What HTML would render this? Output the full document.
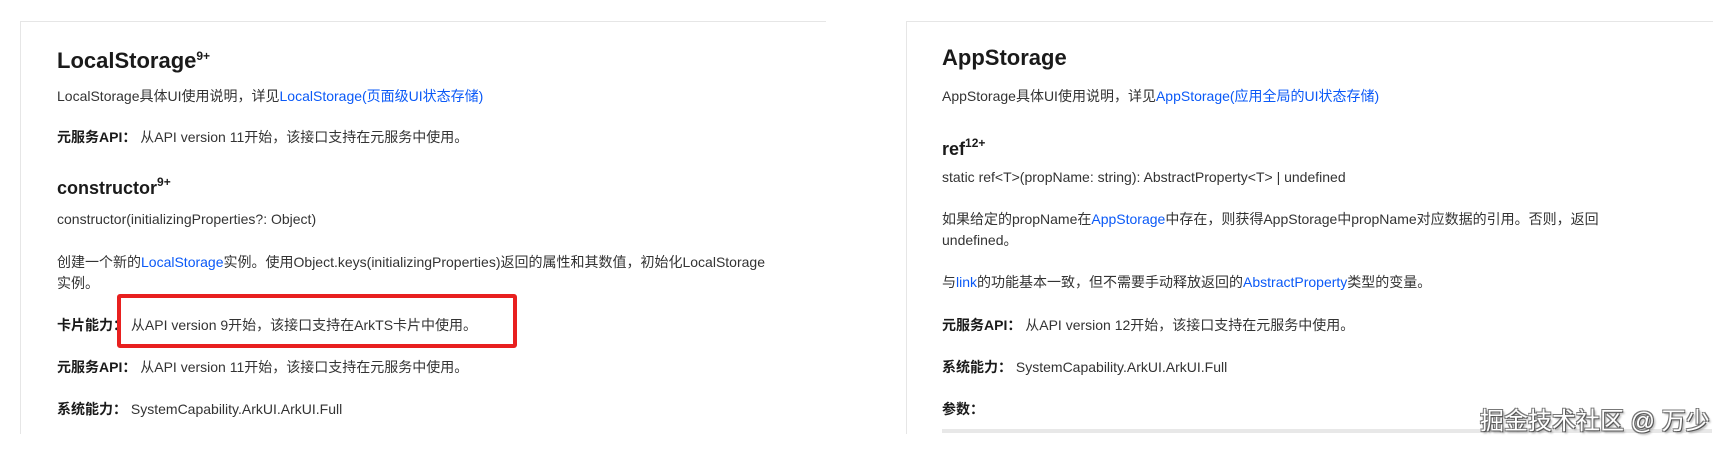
<!DOCTYPE html>
<html><head><meta charset="utf-8"><style>
*{margin:0;padding:0}
body{width:1731px;height:453px;background:#fff;position:relative;overflow:hidden;font-family:"Liberation Sans","Noto Sans CJK SC",sans-serif;color:#333;font-size:14px}
.t{position:absolute;white-space:nowrap;line-height:20px}
.h{font-size:22px;font-weight:bold;color:#1a1a1a;line-height:28px}
.h2{font-size:18px;font-weight:bold;color:#1a1a1a;line-height:24px}
sup{font-size:12px;vertical-align:8px}
a{color:#0a59f7;text-decoration:none}
b{color:#1a1a1a}
.panel{position:absolute;border-top:1px solid #e6e6e6;border-left:1px solid #e6e6e6}
</style></head><body>
<div class="panel" style="left:20px;top:21px;width:805px;height:412px"></div>
<div class="panel" style="left:906px;top:21px;width:806px;height:412px"></div>

<div class="t h" style="left:57px;top:42px">LocalStorage<sup>9+</sup></div>
<div class="t" style="left:57px;top:86px">LocalStorage具体UI使用说明，详见<a>LocalStorage(页面级UI状态存储)</a></div>
<div class="t" style="left:57px;top:127px"><b>元服务API：</b> 从API version 11开始，该接口支持在元服务中使用。</div>
<div class="t h2" style="left:57px;top:170px">constructor<sup>9+</sup></div>
<div class="t" style="left:57px;top:209px">constructor(initializingProperties?: Object)</div>
<div class="t" style="left:57px;top:252px">创建一个新的<a>LocalStorage</a>实例。使用Object.keys(initializingProperties)返回的属性和其数值，初始化LocalStorage</div>
<div class="t" style="left:57px;top:273px">实例。</div>
<div class="t" style="left:57px;top:315px"><b>卡片能力：</b> 从API version 9开始，该接口支持在ArkTS卡片中使用。</div>
<div style="position:absolute;left:117px;top:294px;width:392px;height:46px;border:4px solid #e8201f;border-radius:3px"></div>
<div class="t" style="left:57px;top:357px"><b>元服务API：</b> 从API version 11开始，该接口支持在元服务中使用。</div>
<div class="t" style="left:57px;top:399px"><b>系统能力：</b> SystemCapability.ArkUI.ArkUI.Full</div>

<div class="t h" style="left:942px;top:44px">AppStorage</div>
<div class="t" style="left:942px;top:86px">AppStorage具体UI使用说明，详见<a>AppStorage(应用全局的UI状态存储)</a></div>
<div class="t h2" style="left:942px;top:131px">ref<sup>12+</sup></div>
<div class="t" style="left:942px;top:167px">static ref&lt;T&gt;(propName: string): AbstractProperty&lt;T&gt; | undefined</div>
<div class="t" style="left:942px;top:209px">如果给定的propName在<a>AppStorage</a>中存在，则获得AppStorage中propName对应数据的引用。否则，返回</div>
<div class="t" style="left:942px;top:230px">undefined。</div>
<div class="t" style="left:942px;top:272px">与<a>link</a>的功能基本一致，但不需要手动释放返回的<a>AbstractProperty</a>类型的变量。</div>
<div class="t" style="left:942px;top:315px"><b>元服务API：</b> 从API version 12开始，该接口支持在元服务中使用。</div>
<div class="t" style="left:942px;top:357px"><b>系统能力：</b> SystemCapability.ArkUI.ArkUI.Full</div>
<div class="t" style="left:942px;top:399px"><b>参数：</b></div>
<div style="position:absolute;left:942px;top:429px;width:770px;height:4px;background:#e8e8e8"></div>

<div class="t" style="left:1480px;top:408px;font-size:24px;line-height:28px;color:#fff;text-shadow:1px 1px 0 #555,-1px -1px 0 #777,1px -1px 0 #777,-1px 1px 0 #777,2px 2px 2px #999">掘金技术社区 @ 万少</div>
</body></html>
